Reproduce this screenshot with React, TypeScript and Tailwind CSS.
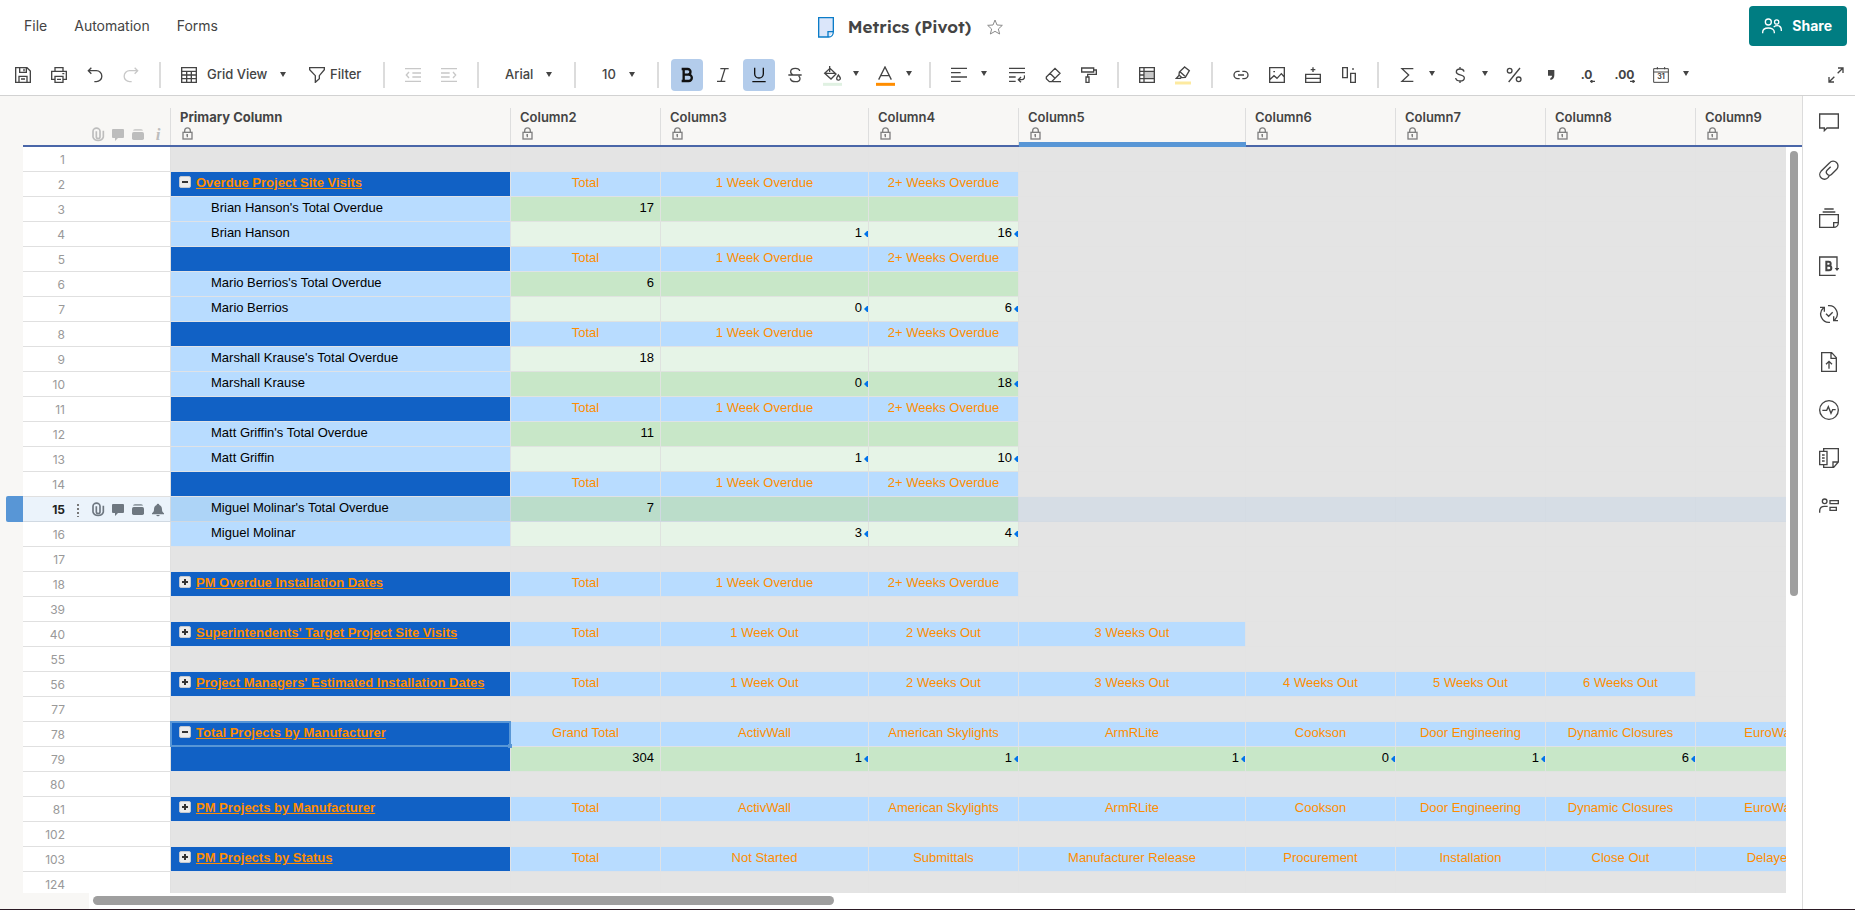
import { ReactNode } from "react";
import clsx from "clsx";

type Tone = "none" | "head" | "green" | "pale";

type Row = {
  n: number;
  name?: string;
  toggle?: "open" | "closed";
  primary?: "dark" | "light";
  tone?: Tone;
  cells?: string[];
};

const columns = [
  { name: "Primary Column", width: "w-[340px]" },
  { name: "Column2", width: "w-[150px]" },
  { name: "Column3", width: "w-[208px]" },
  { name: "Column4", width: "w-[150px]" },
  { name: "Column5", width: "w-[227px]" },
  { name: "Column6", width: "w-[150px]" },
  { name: "Column7", width: "w-[150px]" },
  { name: "Column8", width: "w-[150px]" },
  { name: "Column9", width: "w-[150px]" },
];

const overdue = ["Total", "1 Week Overdue", "2+ Weeks Overdue"];
const makers = [
  "ActivWall",
  "American Skylights",
  "ArmRLite",
  "Cookson",
  "Door Engineering",
  "Dynamic Closures",
  "EuroWall",
];

const person = (
  n: number,
  name: string,
  values: [string, string, string],
  tones: [Tone, Tone] = ["green", "pale"]
): Row[] => [
  {
    n,
    name: `${name}'s Total Overdue`,
    primary: "light",
    tone: tones[0],
    cells: [values[0], "", ""],
  },
  {
    n: n + 1,
    name,
    primary: "light",
    tone: tones[1],
    cells: ["", values[1], values[2]],
  },
];

const section = (
  n: number,
  name: string,
  cells: string[],
  toggle?: Row["toggle"]
): Row => ({ n, name, cells, toggle, primary: "dark", tone: "head" });

const rows: Row[] = [
  { n: 1 },
  section(2, "Overdue Project Site Visits", overdue, "open"),
  ...person(3, "Brian Hanson", ["17", "1", "16"]),
  section(5, "", overdue),
  ...person(6, "Mario Berrios", ["6", "0", "6"]),
  section(8, "", overdue),
  ...person(9, "Marshall Krause", ["18", "0", "18"], ["pale", "green"]),
  section(11, "", overdue),
  ...person(12, "Matt Griffin", ["11", "1", "10"]),
  section(14, "", overdue),
  ...person(15, "Miguel Molinar", ["7", "3", "4"]),
  { n: 17 },
  section(18, "PM Overdue Installation Dates", overdue, "closed"),
  { n: 39 },
  section(
    40,
    "Superintendents' Target Project Site Visits",
    ["Total", "1 Week Out", "2 Weeks Out", "3 Weeks Out"],
    "closed"
  ),
  { n: 55 },
  section(
    56,
    "Project Managers' Estimated Installation Dates",
    [
      "Total",
      "1 Week Out",
      "2 Weeks Out",
      "3 Weeks Out",
      "4 Weeks Out",
      "5 Weeks Out",
      "6 Weeks Out",
    ],
    "closed"
  ),
  { n: 77 },
  section(78, "Total Projects by Manufacturer", ["Grand Total", ...makers], "open"),
  {
    n: 79,
    primary: "dark",
    tone: "green",
    cells: ["304", "1", "1", "1", "0", "1", "6", ""],
  },
  { n: 80 },
  section(81, "PM Projects by Manufacturer", ["Total", ...makers], "closed"),
  { n: 102 },
  section(
    103,
    "PM Projects by Status",
    [
      "Total",
      "Not Started",
      "Submittals",
      "Manufacturer Release",
      "Procurement",
      "Installation",
      "Close Out",
      "Delayed",
    ],
    "closed"
  ),
  { n: 124 },
];

const ACTIVE_ROW = 15;
const ACTIVE_COLUMN = "Column5";
const SELECTED_ROW = 78;

const tones: Record<Tone, string> = {
  none: "bg-[#e4e4e4] border-[#e3e3e3]",
  head: "bg-[#b8dcff] border-[#dfe2e6]",
  green: "bg-[#c8e7c8] border-[#e0e3e0]",
  pale: "bg-[#e6f4e7] border-[#dfe2df]",
};

const activeTones: Record<Tone, string> = {
  none: "bg-[#d6dde5] border-[#d4dbe3]",
  head: "bg-[#add4f7] border-[#d0d9e2]",
  green: "bg-[#bbddca] border-[#d0d9e2]",
  pale: "bg-[#d8eae4] border-[#d0d9e2]",
};

// Icons are drawn on a 48 unit grid, three units to the pixel.
const Icon = ({
  children,
  className = "size-4",
  box = "0 0 48 48",
}: {
  children: ReactNode;
  className?: string;
  box?: string;
}) => (
  <svg
    viewBox={box}
    className={clsx("shrink-0", className)}
    fill="none"
    stroke="currentColor"
    strokeWidth="4"
    aria-hidden="true"
  >
    {children}
  </svg>
);

const Caret = ({ className }: { className?: string }) => (
  <svg viewBox="0 0 6 5" className={clsx("h-[5px] w-1.5 shrink-0", className)} aria-hidden="true">
    <path d="M0 0h6L3 5z" fill="currentColor" />
  </svg>
);

const Lock = () => (
  <Icon className="size-4 text-[#808080]">
    <rect x="9" y="19" width="27" height="20" />
    <path d="M14 19v-5a8 8 0 0 1 17 0v5M22 24v10M19 27h4" />
  </Icon>
);

const Clip = () => (
  <Icon className="size-4">
    <path
      d="M40 11v19a16 14 0 0 1-31 0V13a10 9 0 0 1 21 0v16a5.500 5.500 0 0 1-11 0V13"
      strokeWidth="5"
    />
  </Icon>
);

const Bubble = () => (
  <Icon className="size-4">
    <path d="M6 9a3 3 0 0 1 3-3h30a3 3 0 0 1 3 3v21a3 3 0 0 1-3 3H24l-9 9v-9H9a3 3 0 0 1-3-3z" fill="currentColor" stroke="none" />
  </Icon>
);

const Tray = () => (
  <Icon className="size-4">
    <path d="M9 11q1-5 6-5h18q5 0 6 5z" fill="currentColor" stroke="none" opacity="0.7" />
    <rect x="6" y="15" width="36" height="24" rx="5" fill="currentColor" stroke="none" />
  </Icon>
);

const Bell = () => (
  <Icon className="size-4">
    <path d="M24 5a4 4 0 0 1 4 4c6 2 8 7 8 13 0 7 2 9 6 12v3H6v-3c4-3 6-5 6-12 0-6 2-11 8-13a4 4 0 0 1 4-4zM19 39h10a5 4 0 0 1-10 0z" fill="currentColor" stroke="none" />
  </Icon>
);

const Tool = ({
  label,
  children,
  active,
  disabled,
  wide,
}: {
  label: string;
  children: ReactNode;
  active?: boolean;
  disabled?: boolean;
  wide?: boolean;
}) => (
  <button
    type="button"
    aria-label={label}
    aria-pressed={active}
    disabled={disabled}
    className={clsx(
      "flex h-8 shrink-0 items-center justify-center rounded",
      wide ? "w-[33px]" : "w-8",
      active && "bg-[#b3cceb] text-[#111]",
      disabled && "text-[#c8c8c8]"
    )}
  >
    {children}
  </button>
);

const MenuTool = ({
  label,
  children,
  width = "w-[49px]",
}: {
  label: string;
  children: ReactNode;
  width?: string;
}) => (
  <button
    type="button"
    aria-label={label}
    aria-haspopup="menu"
    className={clsx("flex h-8 shrink-0 items-center rounded pl-2", width)}
  >
    <span className="flex w-[30px]">{children}</span>
    <Caret className="-mt-1" />
  </button>
);

const Picker = ({
  label,
  value,
  className,
}: {
  label: string;
  value: string;
  className: string;
}) => (
  <div className={clsx("relative h-8 shrink-0", className)}>
    <select
      aria-label={label}
      defaultValue={value}
      className="h-8 w-full appearance-none bg-transparent pl-3.5 text-[13px] font-medium"
    >
      <option>{value}</option>
    </select>
    <Caret className="pointer-events-none absolute top-[13px] right-[10px]" />
  </div>
);

const Divider = () => <div className="mx-2 h-[26px] w-0.5 shrink-0 bg-[#dcdcdc]" />;

const TopBar = () => (
  <header className="grid grid-cols-[1fr_auto_1fr] items-center px-2 pt-1.5">
    <nav className="flex gap-[27px] pl-4 text-sm text-[#444]">
      <a href="#file">File</a>
      <a href="#automation">Automation</a>
      <a href="#forms">Forms</a>
    </nav>
    <div className="flex items-center pt-0.5 pr-[34px]">
      <Icon box="0 0 48 63" className="h-[21px] w-4 text-[#0b7cc8]">
        <path d="M2 2h44v42L32 60H2z" fill="#dbe6fa" stroke="none" />
        <path d="M46 44V2H2v58h30c8 0 14-7 14-16H30v16" />
      </Icon>
      <h1 className="ml-3.5 font-[Lexend,Inter,sans-serif] text-[17px] leading-6 font-semibold text-[#444]">
        Metrics (Pivot)
      </h1>
      <button type="button" aria-label="Add to favorites" className="ml-4 text-[#8a8a8a]">
        <Icon>
          <path d="M24 3l6 15 16 1-12 11 4 15-14-8-14 8 4-15L2 19l16-1z" strokeWidth="3" />
        </Icon>
      </button>
    </div>
    <button
      type="button"
      className="flex h-10 items-center gap-2.5 justify-self-end rounded bg-[#007d82] pr-[15px] pl-[13px] text-sm font-bold text-white"
    >
      <Icon box="0 0 60 48" className="h-4 w-5">
        <circle cx="19" cy="12" r="9" />
        <circle cx="44" cy="12" r="6.500" />
        <path d="M2 46v-3c0-8 7-13 17-13s18 5 18 13v3M35 27c4-3 8-4 11-4 7 0 12 6 12 14v2" />
      </Icon>
      Share
    </button>
  </header>
);

const Toolbar = () => (
  <div
    role="toolbar"
    aria-label="Formatting"
    className="mt-[13px] flex items-center gap-1 overflow-hidden pr-[3px] pb-1 pl-[7px] text-[#444]"
  >
    <Tool label="Save">
      <Icon>
        <path d="M2 2h34l10 10v34H2z" />
        <path d="M14 2v14h20V2M27 5v8M12 46V28h24v18M18 36h12" />
      </Icon>
    </Tool>
    <Tool label="Print">
      <Icon>
        <path d="M12 13V2h24v11M12 37H2V13h44v24H36" />
        <path d="M12 28h24v18H12zM34 20h6M18 37h12" />
      </Icon>
    </Tool>
    <Tool label="Undo">
      <Icon>
        <path d="M13 2l-9 9 9 9M4 11h24a16 16 0 0 1 0 33h-6" />
      </Icon>
    </Tool>
    <Tool label="Redo" disabled>
      <Icon>
        <path d="M35 2l9 9-9 9M44 11H20a16 16 0 0 0 0 33h6" />
      </Icon>
    </Tool>
    <Divider />
    <div className="relative h-8 w-[124px] shrink-0">
      <Icon className="pointer-events-none absolute top-2 left-2 size-4">
        <path d="M2 2h44v44H2zM2 13h44M2 24h44M2 35h44M17 13v33M31 13v33" />
      </Icon>
      <select
        aria-label="View"
        defaultValue="Grid View"
        className="h-8 w-full appearance-none bg-transparent pl-[34px] text-[13px] font-medium"
      >
        <option>Grid View</option>
      </select>
      <Caret className="pointer-events-none absolute top-[13px] right-[11px]" />
    </div>
    <button
      type="button"
      className="flex h-8 w-[70px] shrink-0 items-center gap-[5px] pl-2 text-[13px] font-medium"
    >
      <Icon>
        <path d="M2 2h44v6L31 26v9L19 46V26L2 8z" />
      </Icon>
      Filter
    </button>
    <Divider />
    <Tool label="Outdent" disabled>
      <Icon>
        <path d="M0 5h48M0 43h48M22 18h26M22 30h26M12 15L4 24l8 9" />
      </Icon>
    </Tool>
    <Tool label="Indent" disabled>
      <Icon>
        <path d="M0 5h48M0 43h48M0 18h26M0 30h26M36 15l8 9-8 9" />
      </Icon>
    </Tool>
    <Divider />
    <Picker label="Font" value="Arial" className="w-[71px]" />
    <Divider />
    <Picker label="Font size" value="10" className="w-[57px]" />
    <Divider />
    <Tool label="Bold" active>
      <Icon>
        <path d="M8 6h18a8.500 8.500 0 0 1 0 17H14h15a9 9 0 0 1 0 19H8M14 6v36" strokeWidth="7" />
      </Icon>
    </Tool>
    <Tool label="Italic">
      <Icon>
        <path d="M16 5h25M6 43h25M30 5L18 43" />
      </Icon>
    </Tool>
    <Tool label="Underline" active>
      <Icon>
        <path d="M11 2v18a13 13 0 0 0 26 0V2M4 44h40" />
      </Icon>
    </Tool>
    <Tool label="Strikethrough">
      <Icon>
        <path d="M38 12C37 6 32 4 25 4c-8 0-14 4-14 10 0 4 3 8 8 10M4 24h40M35 27c3 3 4 5 4 8 0 6-6 9-14 9-9 0-14-4-15-10" />
      </Icon>
    </Tool>
    <MenuTool label="Fill color">
      <Icon box="0 0 57 60" className="mt-0.5 h-5 w-[19px]">
        <path d="M5 22L21 7l18 17-15 15zM8 22h29M20 18V0" />
        <path d="M46 27c4 5 6 8 6 10a5 5 0 0 1-11 0c0-2 2-5 5-10z" />
        <path d="M0 55h57" stroke="#e0f1e2" strokeWidth="9" />
      </Icon>
    </MenuTool>
    <MenuTool label="Text color">
      <Icon box="0 0 57 60" className="mt-0.5 h-5 w-[19px]">
        <path d="M8 41L27 3l19 38M15 29h25" />
        <path d="M0 55h57" stroke="#ff8d00" strokeWidth="9" />
      </Icon>
    </MenuTool>
    <Divider />
    <MenuTool label="Align" width="w-[54px]">
      <Icon>
        <path d="M0 4h48M0 17h29M0 30h48M0 43h29" />
      </Icon>
    </MenuTool>
    <Tool label="Wrap">
      <Icon>
        <path d="M0 4h48M0 17h48M0 30h20M0 43h20M46 25c2 7-1 13-8 13H29M36 30l-8 8 8 8" />
      </Icon>
    </Tool>
    <Tool label="Clear format">
      <Icon>
        <path d="M4 30L30 4l15 15-25 25h-7L4 35zM15 19l15 15M22 44h26" />
      </Icon>
    </Tool>
    <Tool label="Format painter">
      <Icon>
        <path d="M2 3h36v12H2zM38 9h8v13H20v8M15 30h9v16h-9z" />
      </Icon>
    </Tool>
    <Divider />
    <Tool label="Conditional formatting">
      <Icon>
        <path d="M17 15h29v20H17z" fill="#c8c8c8" stroke="none" />
        <path d="M2 2h44v44H2zM15 2v44M2 13h44M2 24h13M2 35h44" />
      </Icon>
    </Tool>
    <Tool label="Highlight changes">
      <Icon box="0 0 48 57" className="h-[19px] w-4">
        <path d="M29 3l14 11-12 20-10 1-9-8 1-9zM15 17l15 14M12 28l-8 9h12l3-3" />
        <path d="M0 51h48" stroke="#fdeaa0" strokeWidth="9" />
      </Icon>
    </Tool>
    <Divider />
    <Tool label="Link">
      <Icon>
        <path d="M20 13h-6a11 11 0 0 0 0 22h6M28 13h6a11 11 0 0 1 0 22h-6M15 24h18" />
      </Icon>
    </Tool>
    <Tool label="Image">
      <Icon>
        <path d="M2 2h44v44H2zM2 38l13-12 9 8 13-14 9 10M13 14h5" />
      </Icon>
    </Tool>
    <Tool label="Insert row">
      <Icon>
        <path d="M2 22h44v24H2zM2 34h44M24 1v14M17 8h14" />
      </Icon>
    </Tool>
    <Tool label="Insert column">
      <Icon>
        <path d="M5 2h14v30H5zM29 19h14v27H29zM36 3v6" />
      </Icon>
    </Tool>
    <Divider />
    <MenuTool label="Sum">
      <Icon>
        <path d="M43 5H9l20 19L9 43h34" />
      </Icon>
    </MenuTool>
    <MenuTool label="Currency">
      <Icon>
        <path d="M36 14c-1-6-6-8-12-8-7 0-11 3-11 9 0 12 24 5 24 18 0 6-5 9-13 9-7 0-12-3-13-9M24 0v6M24 42v6" />
      </Icon>
    </MenuTool>
    <Tool label="Percent" wide>
      <Icon>
        <path d="M42 3L8 45" />
        <circle cx="11" cy="11" r="7" />
        <circle cx="38" cy="37" r="7" />
      </Icon>
    </Tool>
    <Tool label="Thousands separator" wide>
      <Icon>
        <path d="M15 9h19v16c0 8-4 13-12 14v-6c3-1 5-3 5-7H15z" fill="currentColor" stroke="none" />
      </Icon>
    </Tool>
    <Tool label="Decrease decimals" wide>
      <span className="relative pr-0.5 text-xs font-bold">
        .0
        <Icon box="0 0 15 9" className="absolute -right-px bottom-0 h-[3px] w-[5px]">
          <path d="M2 4h13M7 0L2 4l5 4" />
        </Icon>
      </span>
    </Tool>
    <Tool label="Increase decimals" wide>
      <span className="relative text-xs font-bold">
        .00
        <Icon box="0 0 15 9" className="absolute -right-px bottom-0 h-[3px] w-[5px]">
          <path d="M0 4h13M8 0l5 4-5 4" />
        </Icon>
      </span>
    </Tool>
    <MenuTool label="Date format">
      <span className="relative flex">
        <Icon>
          <path d="M2 5h44v41H2zM2 15h44M13 0v7M35 0v7" strokeWidth="3" />
        </Icon>
        <span className="absolute inset-x-0 top-[6px] text-center text-[7px] leading-2 font-bold">
          31
        </span>
      </span>
    </MenuTool>
    <div className="ml-auto">
      <Tool label="Full screen">
        <Icon>
          <path d="M30 3h15v15M45 3L29 19M3 30v15h15M3 45l16-16" />
        </Icon>
      </Tool>
    </div>
  </div>
);

const Toggle = ({ open, name }: { open: boolean; name: string }) => (
  <button
    type="button"
    aria-expanded={open}
    aria-label={name}
    className="mt-1 mr-[5px] flex size-3 shrink-0 items-center justify-center rounded-xs border border-[#c4c8cf] bg-[#ececec] text-[#333]"
  >
    <svg viewBox="0 0 6 6" className="size-1.5" aria-hidden="true">
      <path d={open ? "M0 2h6v2H0z" : "M0 2h2V0h2v2h2v2H4v2H2V4H0z"} fill="currentColor" />
    </svg>
  </button>
);

const Cell = ({
  value,
  tone,
  active,
  linked,
}: {
  value: string;
  tone: Tone;
  active: boolean;
  linked: boolean;
}) => (
  <td
    className={clsx(
      "relative border-r border-b p-0 align-top leading-[22px] whitespace-nowrap",
      active ? activeTones[tone] : tones[tone],
      tone === "head" ? "text-center text-[#ff8d00]" : "pr-1.5 text-right text-black"
    )}
  >
    {value}
    {linked && (
      <svg viewBox="0 0 4 6" className="absolute top-[9px] right-0 h-1.5 w-1" aria-hidden="true">
        <path d="M4 0H3L0 3l3 3h1z" fill="#0073ea" />
      </svg>
    )}
  </td>
);

const GridRow = ({ row }: { row: Row }) => {
  const active = row.n === ACTIVE_ROW;
  const tone = row.tone ?? "none";
  return (
    <tr className="h-[25px]">
      <td className="relative p-0">
        {active && <div className="absolute -top-px right-0 left-1.5 h-[26px] rounded-l-xs bg-[#5896d6]" />}
      </td>
      <th
        scope="row"
        className={clsx(
          "border-r border-b p-0 font-[Inter,sans-serif] text-xs",
          active
            ? "border-[#d0d9e2] bg-[#ebf3fb] font-bold text-[#222]"
            : "border-[#e0e0e0] bg-white font-normal text-[#999]"
        )}
      >
        <div className="flex h-6 items-center pt-0.5">
          <span className="w-[42px] text-right">{row.n}</span>
          {active && (
            <>
              <svg viewBox="0 0 2 14" className="ml-[12px] h-3.5 w-0.5" fill="#777" aria-hidden="true">
                <path d="M0 1h2v2H0zM0 5h2v2H0zM0 9h2v2H0zM0 13h2v1H0z" />
              </svg>
              <span className="ml-[11px] flex gap-1 text-[#6e7780]">
                <Clip />
                <Bubble />
                <Tray />
                <Bell />
              </span>
            </>
          )}
        </div>
      </th>
      <td
        className={clsx(
          "relative border-r border-b p-0 align-top leading-[22px] whitespace-nowrap",
          !row.primary && tones.none,
          row.primary === "dark" && "border-[#e0e2e6] bg-[#1161c5] font-bold text-[#ff8d00] underline",
          row.primary === "light" && "pl-10 text-black",
          row.primary === "light" && (active ? activeTones.head : tones.head)
        )}
      >
        {row.toggle ? (
          <div className="flex pl-2">
            <Toggle open={row.toggle === "open"} name={row.name ?? ""} />
            {row.name}
          </div>
        ) : (
          row.name
        )}
        {row.n === SELECTED_ROW && (
          <div className="pointer-events-none absolute -inset-px z-10 border-2 border-[#5896d6]">
            <div className="absolute -right-[3px] -bottom-[3px] size-1 bg-[#5896d6]" />
          </div>
        )}
      </td>
      {columns.slice(1).map((column, i) => {
        const value = row.cells?.[i];
        const cellTone = value === undefined ? "none" : tone;
        return (
          <Cell
            key={column.name}
            value={value ?? ""}
            tone={cellTone}
            active={active}
            linked={i > 0 && !!value && cellTone !== "head"}
          />
        );
      })}
    </tr>
  );
};

const Grid = () => (
  <div className="relative min-h-0 flex-1 overflow-hidden bg-[#f8f7f5]">
    <table className="w-0 table-fixed border-separate border-spacing-0 font-['Liberation_Sans',Arial,sans-serif] text-[13px]">
      <colgroup>
        <col className="w-[23px]" />
        <col className="w-[148px]" />
        {columns.map((column) => (
          <col key={column.name} className={column.width} />
        ))}
      </colgroup>
      <thead className="font-[Inter,sans-serif] text-[#444]">
        <tr>
          <td className="p-0" />
          <th scope="col" aria-label="Row" className="border-b-2 border-[#4a66a8] p-0">
            <div className="mt-3 flex h-[37px] items-end gap-1 border-r border-[#dedede] pb-0.5 pl-[67px] text-[#bdbdbd]">
              <Clip />
              <Bubble />
              <Tray />
              <span className="w-4 text-center font-['Liberation_Serif',serif] text-[17px] leading-4 font-bold italic">
                i
              </span>
            </div>
          </th>
          {columns.map((column, i) => (
            <th
              key={column.name}
              scope="col"
              className={clsx(
                "relative border-b-2 border-[#4a66a8] p-0 text-left text-[13px] leading-[18px]",
                i === 0 ? "font-bold" : "font-semibold"
              )}
            >
              <div className="mt-3 h-[37px] border-r border-[#dedede] pl-[9px]">
                {column.name}
                <Lock />
              </div>
              {column.name === ACTIVE_COLUMN && (
                <div className="absolute inset-x-0 -bottom-0.5 h-[5px] bg-[#5896d6]" />
              )}
            </th>
          ))}
        </tr>
      </thead>
      <tbody>
        {rows.map((row) => (
          <GridRow key={row.n} row={row} />
        ))}
      </tbody>
    </table>
    <div className="absolute top-[51px] right-0 bottom-0 z-20 w-4 bg-white px-1 pt-1">
      <div className="h-[445px] rounded-full bg-[#9f9f9f]" />
    </div>
  </div>
);

const sideTools: { label: string; icon: ReactNode }[] = [
  {
    label: "Conversations",
    icon: <path d="M2 6h56v42H24l-8 8v-8H2z" />,
  },
  {
    label: "Attachments",
    icon: (
      <path d="M31 47L27 53A14 14 0 0 1 6 34L32 8a14 14 0 0 1 21 20L38 43a9 9 0 0 1-13-13l10-10" />
    ),
  },
  {
    label: "Proofs",
    icon: <path d="M16 3h28M11 12h38M58 44V20H2v38h42c8 0 14-6 14-14H44v14" />,
  },
  {
    label: "Brandfolder",
    icon: (
      <>
        <path d="M50 58H2V3h52v32M54 32v10" />
        <path d="M47 36h14l-7 9z" fill="currentColor" stroke="none" />
        <path d="M19 17h10a6 6 0 0 1 0 12h-5 6a6 6 0 0 1 0 14H19M22 15v29" strokeWidth="6" />
      </>
    ),
  },
  {
    label: "Update requests",
    icon: (
      <>
        <path d="M13 12a25 25 0 0 0 20 43M27 5a25 25 0 0 1 20 43M3 10h13v13M57 50H44V37" />
        <path d="M21 29l8 8 12-12" />
      </>
    ),
  },
  {
    label: "Publish",
    icon: <path d="M8 2h30l14 15v41H8zM36 2v17h16M30 50V29M21 37l9-9 9 9" />,
  },
  {
    label: "Activity log",
    icon: (
      <>
        <circle cx="30" cy="30" r="28" />
        <path d="M10 31h13l5-11 8 20 5-11h9" />
      </>
    ),
  },
  {
    label: "Summary",
    icon: (
      <path d="M14 10V2h44v40L44 58H14v-8M58 42H42v16M2 10h22v40H2zM9 21h8M9 30h8M9 39h8" />
    ),
  },
  {
    label: "Resources",
    icon: (
      <>
        <circle cx="17" cy="16" r="7" />
        <path d="M2 50v-4c0-9 5-15 14-15h10M33 14h25v9H33zM33 34h19v9H33z" />
      </>
    ),
  },
];

const SidePanel = () => (
  <aside className="flex w-[53px] shrink-0 flex-col items-center gap-2 border-l border-[#dcdcdc] bg-white pt-1.5 text-[#444]">
    {sideTools.map(({ label, icon }) => (
      <button
        key={label}
        type="button"
        aria-label={label}
        className="flex size-10 shrink-0 items-center justify-center"
      >
        <Icon box="0 0 60 60" className="size-5">
          {icon}
        </Icon>
      </button>
    ))}
  </aside>
);

export default function App() {
  return (
    <div className="flex h-screen flex-col overflow-hidden border-b border-[#2b1a24] bg-white font-[Inter,sans-serif]">
      <TopBar />
      <Toolbar />
      <div className="flex min-h-0 flex-1 border-t border-[#d2d2d2]">
        <main className="flex min-w-0 flex-1 flex-col">
          <Grid />
          <div className="flex h-4 shrink-0">
            <div className="w-[89px] bg-[#f8f7f5]" />
            <div className="flex-1 bg-white px-1 pt-[3px]">
              <div className="h-[9px] w-10/23 rounded-full bg-[#9f9f9f]" />
            </div>
          </div>
        </main>
        <SidePanel />
      </div>
    </div>
  );
}
